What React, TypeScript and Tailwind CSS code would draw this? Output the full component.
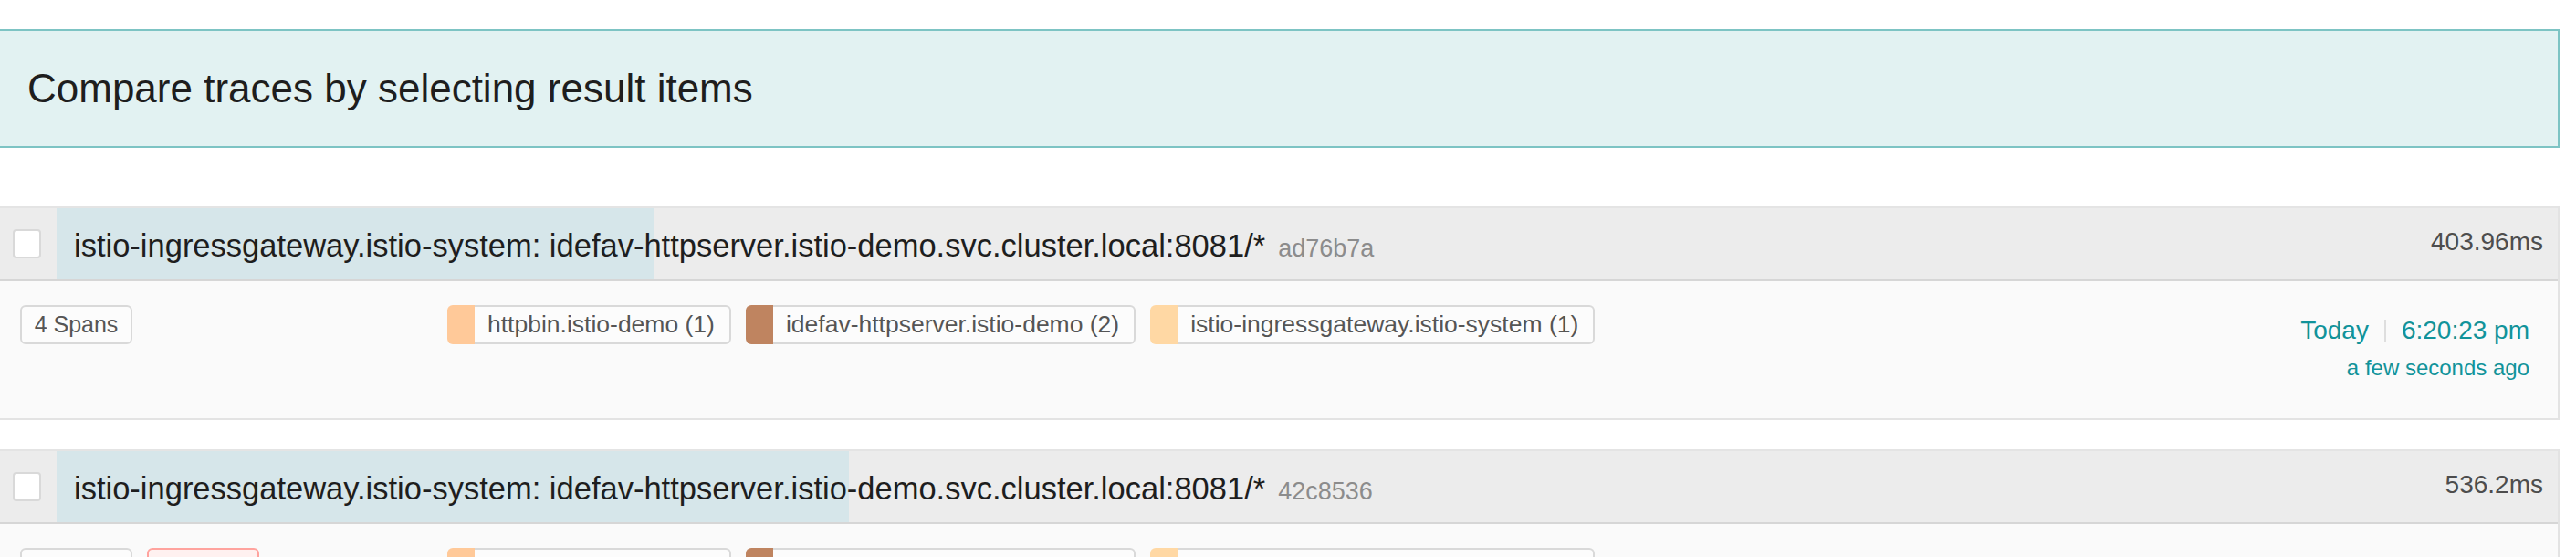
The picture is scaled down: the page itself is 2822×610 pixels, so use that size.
import React from "react";

type Svc = { label: string; swatch: string };

const SERVICES: Svc[] = [
  { label: "httpbin.istio-demo (1)", swatch: "bg-[#ffc999]" },
  { label: "idefav-httpserver.istio-demo (2)", swatch: "bg-[#bf8460]" },
  { label: "istio-ingressgateway.istio-system (1)", swatch: "bg-[#ffd8a4]" },
];

const TITLE =
  "istio-ingressgateway.istio-system: idefav-httpserver.istio-demo.svc.cluster.local:8081/*";

const MAX_MS = 536.2;
const FULL_BAR = 868;

function ServiceTag({ svc }: { svc: Svc }) {
  return (
    <div className="flex h-[43px] items-stretch">
      <div className={`w-[30px] shrink-0 rounded-l-[6px] ${svc.swatch}`} />
      <div className="flex items-center whitespace-nowrap rounded-r-[6px] border-y-2 border-r-2 border-[#d9d9d9] bg-[#fcfcfc] pl-[14px] pr-[16px] text-[26.5px] text-[#555555]">
        {svc.label}
      </div>
    </div>
  );
}

function CountBadge({ children, error }: { children: React.ReactNode; error?: boolean }) {
  return (
    <div
      className={
        error
          ? "flex h-[43px] w-[123px] items-center justify-center whitespace-nowrap rounded-[6px] border-2 border-[#ffa39e] bg-[#fff1f0] text-[25px] text-[#cf1322]"
          : "flex h-[43px] w-[123px] items-center justify-center whitespace-nowrap rounded-[6px] border-2 border-[#d9d9d9] bg-[#fcfcfc] text-[25px] text-[#555555]"
      }
    >
      {children}
    </div>
  );
}

function ResultItem({
  traceId,
  duration,
  ms,
  errors,
}: {
  traceId: string;
  duration: string;
  ms: number;
  errors?: number;
}) {
  const barWidth = Math.round((ms / MAX_MS) * FULL_BAR);
  return (
    <div className="border-r-2 border-b-2 border-[#e3e3e3]">
      <div className="flex h-[82px] items-stretch border-t-2 border-b-2 border-t-[#e4e4e4] border-b-[#d6d6d6] bg-[#ececec]">
        <div className="flex w-[62px] shrink-0 items-center pl-[14px]">
          <div className="h-[32px] w-[31px] rounded-[4px] border-2 border-[#d9d9d9] bg-white" />
        </div>
        <div className="relative flex flex-1 items-center">
          <div className="absolute inset-y-0 left-0 bg-[#d6e6ea]" style={{ width: barWidth }} />
          <div className="relative mt-[5px] flex items-baseline whitespace-nowrap pl-[19px]">
            <span className="text-[34.5px] text-[#1e1e1e]">{TITLE}</span>
            <span className="ml-[14px] text-[27px] text-[#8c8c8c]">{traceId}</span>
          </div>
          <div className="relative ml-auto pb-[4px] pr-[16px] text-[28px] text-[#4d4d4d]">{duration}</div>
        </div>
      </div>
      <div className="flex h-[150px] bg-[#fafafa]">
        <div className="flex w-[490px] shrink-0 items-start gap-[16px] pl-[22px] pt-[26px]">
          <CountBadge>4 Spans</CountBadge>
          {errors ? <CountBadge error>{errors} Error</CountBadge> : null}
        </div>
        <div className="flex items-start gap-[16px] pt-[26px]">
          {SERVICES.map((s) => (
            <ServiceTag key={s.label} svc={s} />
          ))}
        </div>
        <div className="ml-auto flex flex-col items-end pr-[31px] pt-[38px] text-[#11939a]">
          <div className="flex items-center text-[28px] leading-[32px]">
            <span>Today</span>
            <span className="mx-[17px] h-[25px] w-[2px] bg-[#dedede]" />
            <span>6:20:23 pm</span>
          </div>
          <div className="mt-[11px] text-[24px] leading-[28px]">a few seconds ago</div>
        </div>
      </div>
    </div>
  );
}

export default function App() {
  return (
    <div className="h-[610px] w-full overflow-hidden bg-white font-['Liberation_Sans',Arial,sans-serif]">
      <div className="w-[2804px] pt-[32px]">
        <div className="flex h-[130px] items-center border-y-2 border-r-2 border-[#7dc4c4] bg-[#e2f2f2] pl-[30px] text-[44px] text-[#1e1e1e]">
          Compare traces by selecting result items
        </div>
        <div className="mt-[64px] flex flex-col gap-[32px]">
          <ResultItem traceId="ad76b7a" duration="403.96ms" ms={403.96} />
          <ResultItem traceId="42c8536" duration="536.2ms" ms={536.2} errors={1} />
        </div>
      </div>
    </div>
  );
}
